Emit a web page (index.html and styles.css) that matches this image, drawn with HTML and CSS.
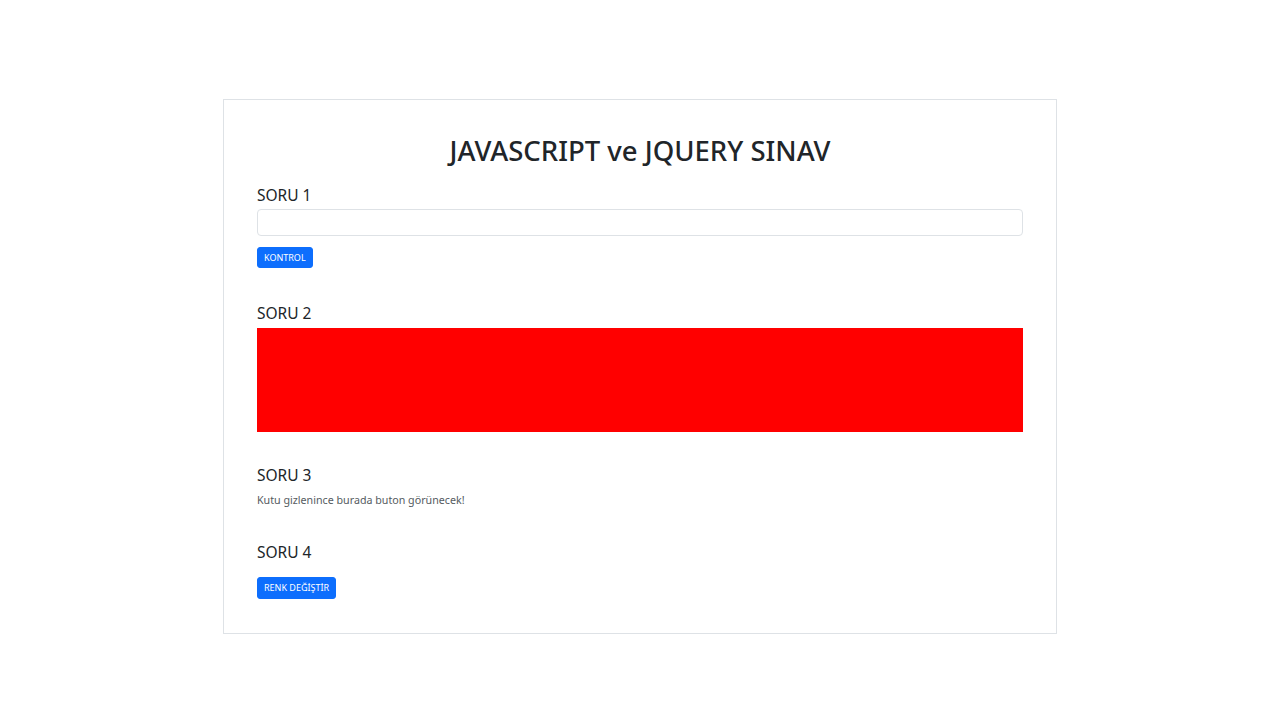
FILE: index.html
```html
<!DOCTYPE html>
<html lang="tr">
<head>
<meta charset="utf-8">
<title>JAVASCRIPT ve JQUERY SINAV</title>
<link rel="stylesheet" href="styles.css">
</head>
<body>
<main class="card">
  <h1 class="title">JAVASCRIPT ve JQUERY SINAV</h1>

  <section class="q q1">
    <h2 class="q-title">SORU 1</h2>
    <input class="field" type="text">
    <button class="btn btn-kontrol">KONTROL</button>
  </section>

  <section class="q q2">
    <h2 class="q-title">SORU 2</h2>
    <div class="red-box"></div>
  </section>

  <section class="q q3">
    <h2 class="q-title">SORU 3</h2>
    <p class="note">Kutu gizlenince burada buton görünecek!</p>
  </section>

  <section class="q q4">
    <h2 class="q-title">SORU 4</h2>
    <button class="btn btn-renk">RENK DEĞİŞTİR</button>
  </section>
</main>
</body>
</html>
```

FILE: styles.css
```css
* { box-sizing: border-box; }

html, body {
  margin: 0;
  padding: 0;
  background: #ffffff;
}

body {
  font-family: "Noto Sans", "Open Sans", sans-serif;
  color: #212529;
}

.card {
  width: 834px;
  margin: 99px auto 0;
  border: 1px solid #dee2e6;
  padding: 33px 33px 34px;
  display: flex;
  flex-direction: column;
}

.title {
  margin: 0;
  font-size: 27.5px;
  font-weight: 500;
  line-height: 36px;
  text-align: center;
  color: #212529;
}

.q {
  display: flex;
  flex-direction: column;
  align-items: flex-start;
}

.q1 { margin-top: 16px; }
.q2 { margin-top: 35px; }
.q3 { margin-top: 33px; }
.q4 { margin-top: 34px; }

.q-title {
  margin: 0;
  font-size: 15.5px;
  font-weight: 400;
  line-height: 20px;
  color: #212529;
}

.field {
  margin-top: 4px;
  width: 100%;
  height: 27px;
  border: 1px solid #dee2e6;
  border-radius: 4px;
  background: #fff;
  padding: 0 8px;
}

.btn {
  background: #0d6efd;
  color: #fff;
  border: 1px solid #0d6efd;
  border-radius: 3px;
  font-family: "Noto Sans", "Open Sans", sans-serif;
  font-size: 9px;
  line-height: 12px;
  padding: 0 6px;
  cursor: pointer;
}

.btn-kontrol {
  margin-top: 11px;
  height: 21px;
}

.btn-renk {
  margin-top: 15px;
  height: 22px;
}

.red-box {
  margin-top: 5px;
  width: 100%;
  height: 104px;
  background: #ff0000;
}

.note {
  margin: 7px 0 0;
  font-size: 10.7px;
  line-height: 16px;
  color: #555b61;
}
```
